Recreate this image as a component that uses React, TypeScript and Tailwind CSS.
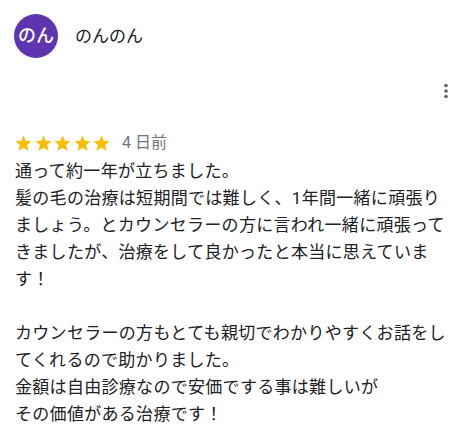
import React from 'react';

const STAR = 'M12 17.27L18.18 21l-1.64-7.03L22 9.24l-7.19-.61L12 2 9.19 8.63 2 9.24l5.46 4.73L5.82 21z';

const lines = [
    '通って約一年が立ちました。',
    '髪の毛の治療は短期間では難しく、1年間一緒に頑張りましょう。とカウンセラーの方に言われ一緒に頑張ってきましたが、治療をして良かったと本当に思えています！',
    '',
    'カウンセラーの方もとても親切でわかりやすくお話をしてくれるので助かりました。',
    '金額は自由診療なので安価でする事は難しいが',
    'その価値がある治療です！',
];

const Stars: React.FC<{ count: number }> = ({ count }) => (
    <div className="flex items-center gap-[0.5px]">
        {Array.from({ length: count }).map((_, i) => (
            <svg key={i} viewBox="0 0 24 24" className="w-[19px] h-[19px] fill-[#fbbc04]">
                <path d={STAR} />
            </svg>
        ))}
    </div>
);

export default function App() {
    return (
        <div
            className="w-[463px] h-[427px] bg-white overflow-hidden text-[#202124]"
            style={{ fontFamily: 'Roboto, "Noto Sans CJK JP", sans-serif' }}
        >
            {/* header */}
            <div className="flex items-center pt-[14px] pl-[14px]">
                <div className="w-[44px] h-[44px] rounded-full bg-[#5e35b1] flex items-center justify-center text-white text-[18px] font-medium leading-none">
                    のん
                </div>
                <span className="ml-[17px] text-[17px] leading-none text-[#202124]">のんのん</span>
            </div>

            {/* menu */}
            <div className="flex justify-end pr-[5px] mt-[21px]">
                <svg viewBox="0 0 24 24" className="w-[24px] h-[24px] fill-[#5f6368]">
                    <circle cx="12" cy="6.5" r="1.8" />
                    <circle cx="12" cy="12" r="1.8" />
                    <circle cx="12" cy="17.5" r="1.8" />
                </svg>
            </div>

            {/* rating */}
            <div className="flex items-center pl-[14px] mt-[30px] h-[20px]">
                <Stars count={5} />
                <span className="ml-[11px] text-[16px] leading-none text-[#70757a]">4 日前</span>
            </div>

            {/* body */}
            <div className="pl-[15px] mt-[5px] w-[455px]">
                <div className="w-[440px] text-[17px] leading-[27px] tracking-[0.3px]">
                    {lines.map((l, i) => (
                        <p key={i} className="min-h-[27px]">
                            {l}
                        </p>
                    ))}
                </div>
            </div>
        </div>
    );
}
